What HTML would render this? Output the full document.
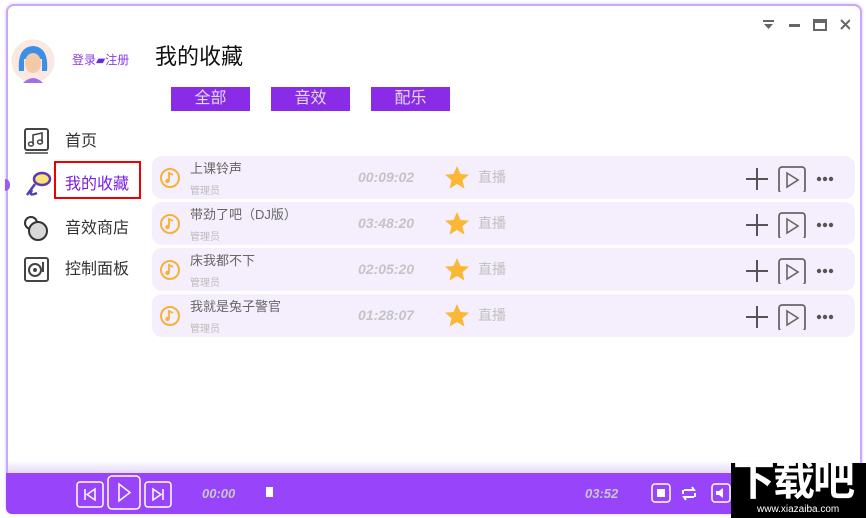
<!DOCTYPE html>
<html><head><meta charset="utf-8"><style>
*{margin:0;padding:0;box-sizing:border-box}
body{width:866px;height:518px;background:#fff;position:relative;overflow:hidden;font-family:"Liberation Sans","Noto Sans CJK SC",sans-serif}
.win{position:absolute;left:6px;top:4px;width:856px;height:510px;border:2px solid #c9a8f7;border-radius:8px;background:#fff;box-shadow:0 0 3px #d9c2fb}
.abs{position:absolute}
.row{position:absolute;left:152px;width:703px;height:43px;background:#f5effd;border-radius:10px}
.t1{position:absolute;left:38px;top:2px;font-size:13px;color:#666}
.t2{position:absolute;left:38px;top:26px;font-size:10px;color:#bbb}
.tm{position:absolute;left:206px;top:13px;font-size:14px;font-weight:bold;font-style:italic;color:#c4c4c4}
.zb{position:absolute;left:326px;top:11px;font-size:14px;color:#c0c0c0}
.btn{position:absolute;top:87px;width:79px;height:24px;background:#8a2be8;color:#e0d8f0;font-size:16px;text-align:center;line-height:23px}
.nav{position:absolute;left:65px;font-size:16px;color:#333}
</style></head><body>
<div class="win"></div>
<svg class="abs" style="left:760px;top:18px" width="90" height="16">
<rect x="3" y="2" width="11" height="2" fill="#666"/><path d="M4 6h9l-4.5 5z" fill="#666"/>
<rect x="29" y="6" width="11" height="3" fill="#666"/>
<rect x="54" y="2" width="12" height="10" fill="none" stroke="#666" stroke-width="2"/><rect x="54" y="2" width="12" height="3" fill="#666"/>
<path d="M81 2l9 9M90 2l-9 9" stroke="#666" stroke-width="2"/>
</svg>
<svg class="abs" style="left:11px;top:39px" width="44" height="44">
<circle cx="22" cy="22" r="21" fill="#fbe8e0" stroke="#eed" stroke-width="1"/>
<path d="M8 32 Q6 8 22 7 Q38 8 36 32 L31 32 L31 20 L13 20 L13 32Z" fill="#3b8fe8"/>
<ellipse cx="22" cy="24" rx="8" ry="10" fill="#f3c9a8"/>
<path d="M12 44 Q22 34 32 44Z" fill="#a070e8"/>
</svg>
<div class="abs" style="left:72px;top:51px;font-size:12px;color:#8a3be8">登录<span style="color:#6a2bd8">▰</span>注册</div>
<div class="abs" style="left:155px;top:39px;font-size:22px;color:#111">我的收藏</div>
<div class="btn" style="left:171px">全部</div>
<div class="btn" style="left:271px">音效</div>
<div class="btn" style="left:371px">配乐</div>
<svg class="abs" style="left:24px;top:128px" width="26" height="26"><rect x="1" y="1" width="23" height="21" rx="2" fill="none" stroke="#444" stroke-width="2"/><path d="M1 25h23" stroke="#444" stroke-width="1.5"/><path d="M9 16V7l9-2v9" fill="none" stroke="#444" stroke-width="1.6"/><ellipse cx="7" cy="16" rx="2.5" ry="2" fill="none" stroke="#444" stroke-width="1.5"/><ellipse cx="16" cy="14" rx="2.5" ry="2" fill="none" stroke="#444" stroke-width="1.5"/></svg>
<div class="nav" style="top:127px">首页</div>
<div class="abs" style="left:5px;top:179px;width:5px;height:12px;background:#9a5cf0;border-radius:0 6px 6px 0"></div>
<svg class="abs" style="left:23px;top:169px" width="30" height="30"><ellipse cx="19" cy="10" rx="8" ry="6" fill="#fbe27a" stroke="#5a3bb0" stroke-width="2.5"/><path d="M12 15 L4 26 M9 21 Q5 28 14 24" fill="none" stroke="#5a3bb0" stroke-width="2.5"/></svg>
<div class="abs" style="left:54px;top:161px;width:87px;height:38px;border:2px solid #e00"></div>
<div class="nav" style="top:170px;color:#7a1fe0">我的收藏</div>
<svg class="abs" style="left:23px;top:215px" width="28" height="28"><circle cx="8" cy="8" r="6" fill="none" stroke="#333" stroke-width="2"/><circle cx="15" cy="16" r="9" fill="#d8d8d8" stroke="#333" stroke-width="2"/></svg>
<div class="nav" style="top:214px">音效商店</div>
<svg class="abs" style="left:24px;top:257px" width="26" height="26"><rect x="1" y="1" width="23" height="23" rx="2" fill="none" stroke="#444" stroke-width="2"/><circle cx="11" cy="13" r="6" fill="none" stroke="#444" stroke-width="2"/><circle cx="11" cy="13" r="2" fill="#444"/><path d="M19 5v10" stroke="#444" stroke-width="2"/></svg>
<div class="nav" style="top:255px">控制面板</div>
<div class="row" style="top:156px"><svg class="abs" style="left:7px;top:11px" width="22" height="22"><circle cx="11" cy="11" r="9" fill="none" stroke="#f7b13a" stroke-width="2"/><path d="M10 14V6l4 2" fill="none" stroke="#f7b13a" stroke-width="1.8"/><circle cx="8.5" cy="14" r="2.2" fill="#f7b13a"/></svg><div class="t1">上课铃声</div><div class="t2">管理员</div><div class="tm">00:09:02</div><svg class="abs" style="left:292px;top:9px" width="26" height="26"><path d="M13 1l3.5 8 8.5.6-6.5 5.6 2 8.4L13 19l-7.5 4.6 2-8.4L1 9.6 9.5 9z" fill="#fbb836"/></svg><div class="zb">直播</div><svg class="abs" style="left:592px;top:10px" width="90" height="26"><path d="M2 13h22M13 2v22" stroke="#555" stroke-width="2"/><rect x="35" y="1" width="26" height="26" rx="3" fill="none" stroke="#666" stroke-width="1.8"/><path d="M43 7l11 7-11 7z" fill="none" stroke="#666" stroke-width="1.6"/><circle cx="75" cy="13" r="2.2" fill="#555"/><circle cx="81" cy="13" r="2.2" fill="#555"/><circle cx="87" cy="13" r="2.2" fill="#555"/></svg></div>
<div class="row" style="top:202px"><svg class="abs" style="left:7px;top:11px" width="22" height="22"><circle cx="11" cy="11" r="9" fill="none" stroke="#f7b13a" stroke-width="2"/><path d="M10 14V6l4 2" fill="none" stroke="#f7b13a" stroke-width="1.8"/><circle cx="8.5" cy="14" r="2.2" fill="#f7b13a"/></svg><div class="t1">带劲了吧（DJ版）</div><div class="t2">管理员</div><div class="tm">03:48:20</div><svg class="abs" style="left:292px;top:9px" width="26" height="26"><path d="M13 1l3.5 8 8.5.6-6.5 5.6 2 8.4L13 19l-7.5 4.6 2-8.4L1 9.6 9.5 9z" fill="#fbb836"/></svg><div class="zb">直播</div><svg class="abs" style="left:592px;top:10px" width="90" height="26"><path d="M2 13h22M13 2v22" stroke="#555" stroke-width="2"/><rect x="35" y="1" width="26" height="26" rx="3" fill="none" stroke="#666" stroke-width="1.8"/><path d="M43 7l11 7-11 7z" fill="none" stroke="#666" stroke-width="1.6"/><circle cx="75" cy="13" r="2.2" fill="#555"/><circle cx="81" cy="13" r="2.2" fill="#555"/><circle cx="87" cy="13" r="2.2" fill="#555"/></svg></div>
<div class="row" style="top:248px"><svg class="abs" style="left:7px;top:11px" width="22" height="22"><circle cx="11" cy="11" r="9" fill="none" stroke="#f7b13a" stroke-width="2"/><path d="M10 14V6l4 2" fill="none" stroke="#f7b13a" stroke-width="1.8"/><circle cx="8.5" cy="14" r="2.2" fill="#f7b13a"/></svg><div class="t1">床我都不下</div><div class="t2">管理员</div><div class="tm">02:05:20</div><svg class="abs" style="left:292px;top:9px" width="26" height="26"><path d="M13 1l3.5 8 8.5.6-6.5 5.6 2 8.4L13 19l-7.5 4.6 2-8.4L1 9.6 9.5 9z" fill="#fbb836"/></svg><div class="zb">直播</div><svg class="abs" style="left:592px;top:10px" width="90" height="26"><path d="M2 13h22M13 2v22" stroke="#555" stroke-width="2"/><rect x="35" y="1" width="26" height="26" rx="3" fill="none" stroke="#666" stroke-width="1.8"/><path d="M43 7l11 7-11 7z" fill="none" stroke="#666" stroke-width="1.6"/><circle cx="75" cy="13" r="2.2" fill="#555"/><circle cx="81" cy="13" r="2.2" fill="#555"/><circle cx="87" cy="13" r="2.2" fill="#555"/></svg></div>
<div class="row" style="top:294px"><svg class="abs" style="left:7px;top:11px" width="22" height="22"><circle cx="11" cy="11" r="9" fill="none" stroke="#f7b13a" stroke-width="2"/><path d="M10 14V6l4 2" fill="none" stroke="#f7b13a" stroke-width="1.8"/><circle cx="8.5" cy="14" r="2.2" fill="#f7b13a"/></svg><div class="t1">我就是兔子警官</div><div class="t2">管理员</div><div class="tm">01:28:07</div><svg class="abs" style="left:292px;top:9px" width="26" height="26"><path d="M13 1l3.5 8 8.5.6-6.5 5.6 2 8.4L13 19l-7.5 4.6 2-8.4L1 9.6 9.5 9z" fill="#fbb836"/></svg><div class="zb">直播</div><svg class="abs" style="left:592px;top:10px" width="90" height="26"><path d="M2 13h22M13 2v22" stroke="#555" stroke-width="2"/><rect x="35" y="1" width="26" height="26" rx="3" fill="none" stroke="#666" stroke-width="1.8"/><path d="M43 7l11 7-11 7z" fill="none" stroke="#666" stroke-width="1.6"/><circle cx="75" cy="13" r="2.2" fill="#555"/><circle cx="81" cy="13" r="2.2" fill="#555"/><circle cx="87" cy="13" r="2.2" fill="#555"/></svg></div>
<div class="abs" style="left:8px;top:460px;width:852px;height:13px;background:linear-gradient(#fff,#e6d8fb)"></div>
<div class="abs" style="left:6px;top:473px;width:856px;height:41px;background:#9844fb;border-radius:0 0 6px 6px"></div>
<svg class="abs" style="left:76px;top:475px" width="100" height="36">
<rect x="1" y="7" width="26" height="25" rx="3" fill="none" stroke="#fff" stroke-width="1.5"/><path d="M9 14v11M19 14l-8 5.5 8 5.5z" fill="none" stroke="#fff" stroke-width="1.5"/>
<rect x="32" y="1" width="32" height="33" rx="4" fill="none" stroke="#fff" stroke-width="1.5"/><path d="M43 9l11 8.5-11 8.5z" fill="none" stroke="#fff" stroke-width="1.5"/>
<rect x="69" y="7" width="26" height="25" rx="3" fill="none" stroke="#fff" stroke-width="1.5"/><path d="M87 14v11M77 14l8 5.5-8 5.5z" fill="none" stroke="#fff" stroke-width="1.5"/>
</svg>
<div class="abs" style="left:202px;top:486px;font-size:13px;font-weight:bold;font-style:italic;color:#c8c8c8">00:00</div>
<div class="abs" style="left:266px;top:487px;width:7px;height:10px;background:#fff"></div>
<div class="abs" style="left:585px;top:486px;font-size:13px;font-weight:bold;font-style:italic;color:#c8c8c8">03:52</div>
<svg class="abs" style="left:650px;top:482px" width="84" height="22">
<rect x="2" y="2" width="18" height="18" rx="3" fill="none" stroke="#fff" stroke-width="1.5"/><rect x="7" y="7" width="8" height="8" fill="#fff"/>
<path d="M34 8h10l-2-3M44 15H34l2 3M33 8v4M45 11v4" fill="none" stroke="#fff" stroke-width="2"/>
<rect x="62" y="2" width="18" height="18" rx="3" fill="none" stroke="#fff" stroke-width="1.5"/><path d="M66 9h3l4-3v10l-4-3h-3z" fill="#fff"/>
</svg>
<div class="abs" style="left:731px;top:463px;width:135px;height:55px;background:#000"></div>
<div class="abs" style="left:733px;top:458px;font-size:42px;font-weight:bold;color:#fff;letter-spacing:-2px;line-height:46px">下载吧</div>
<div class="abs" style="left:757px;top:504px;font-size:10px;color:#fff">www.xiazaiba.com</div>
</body></html>
